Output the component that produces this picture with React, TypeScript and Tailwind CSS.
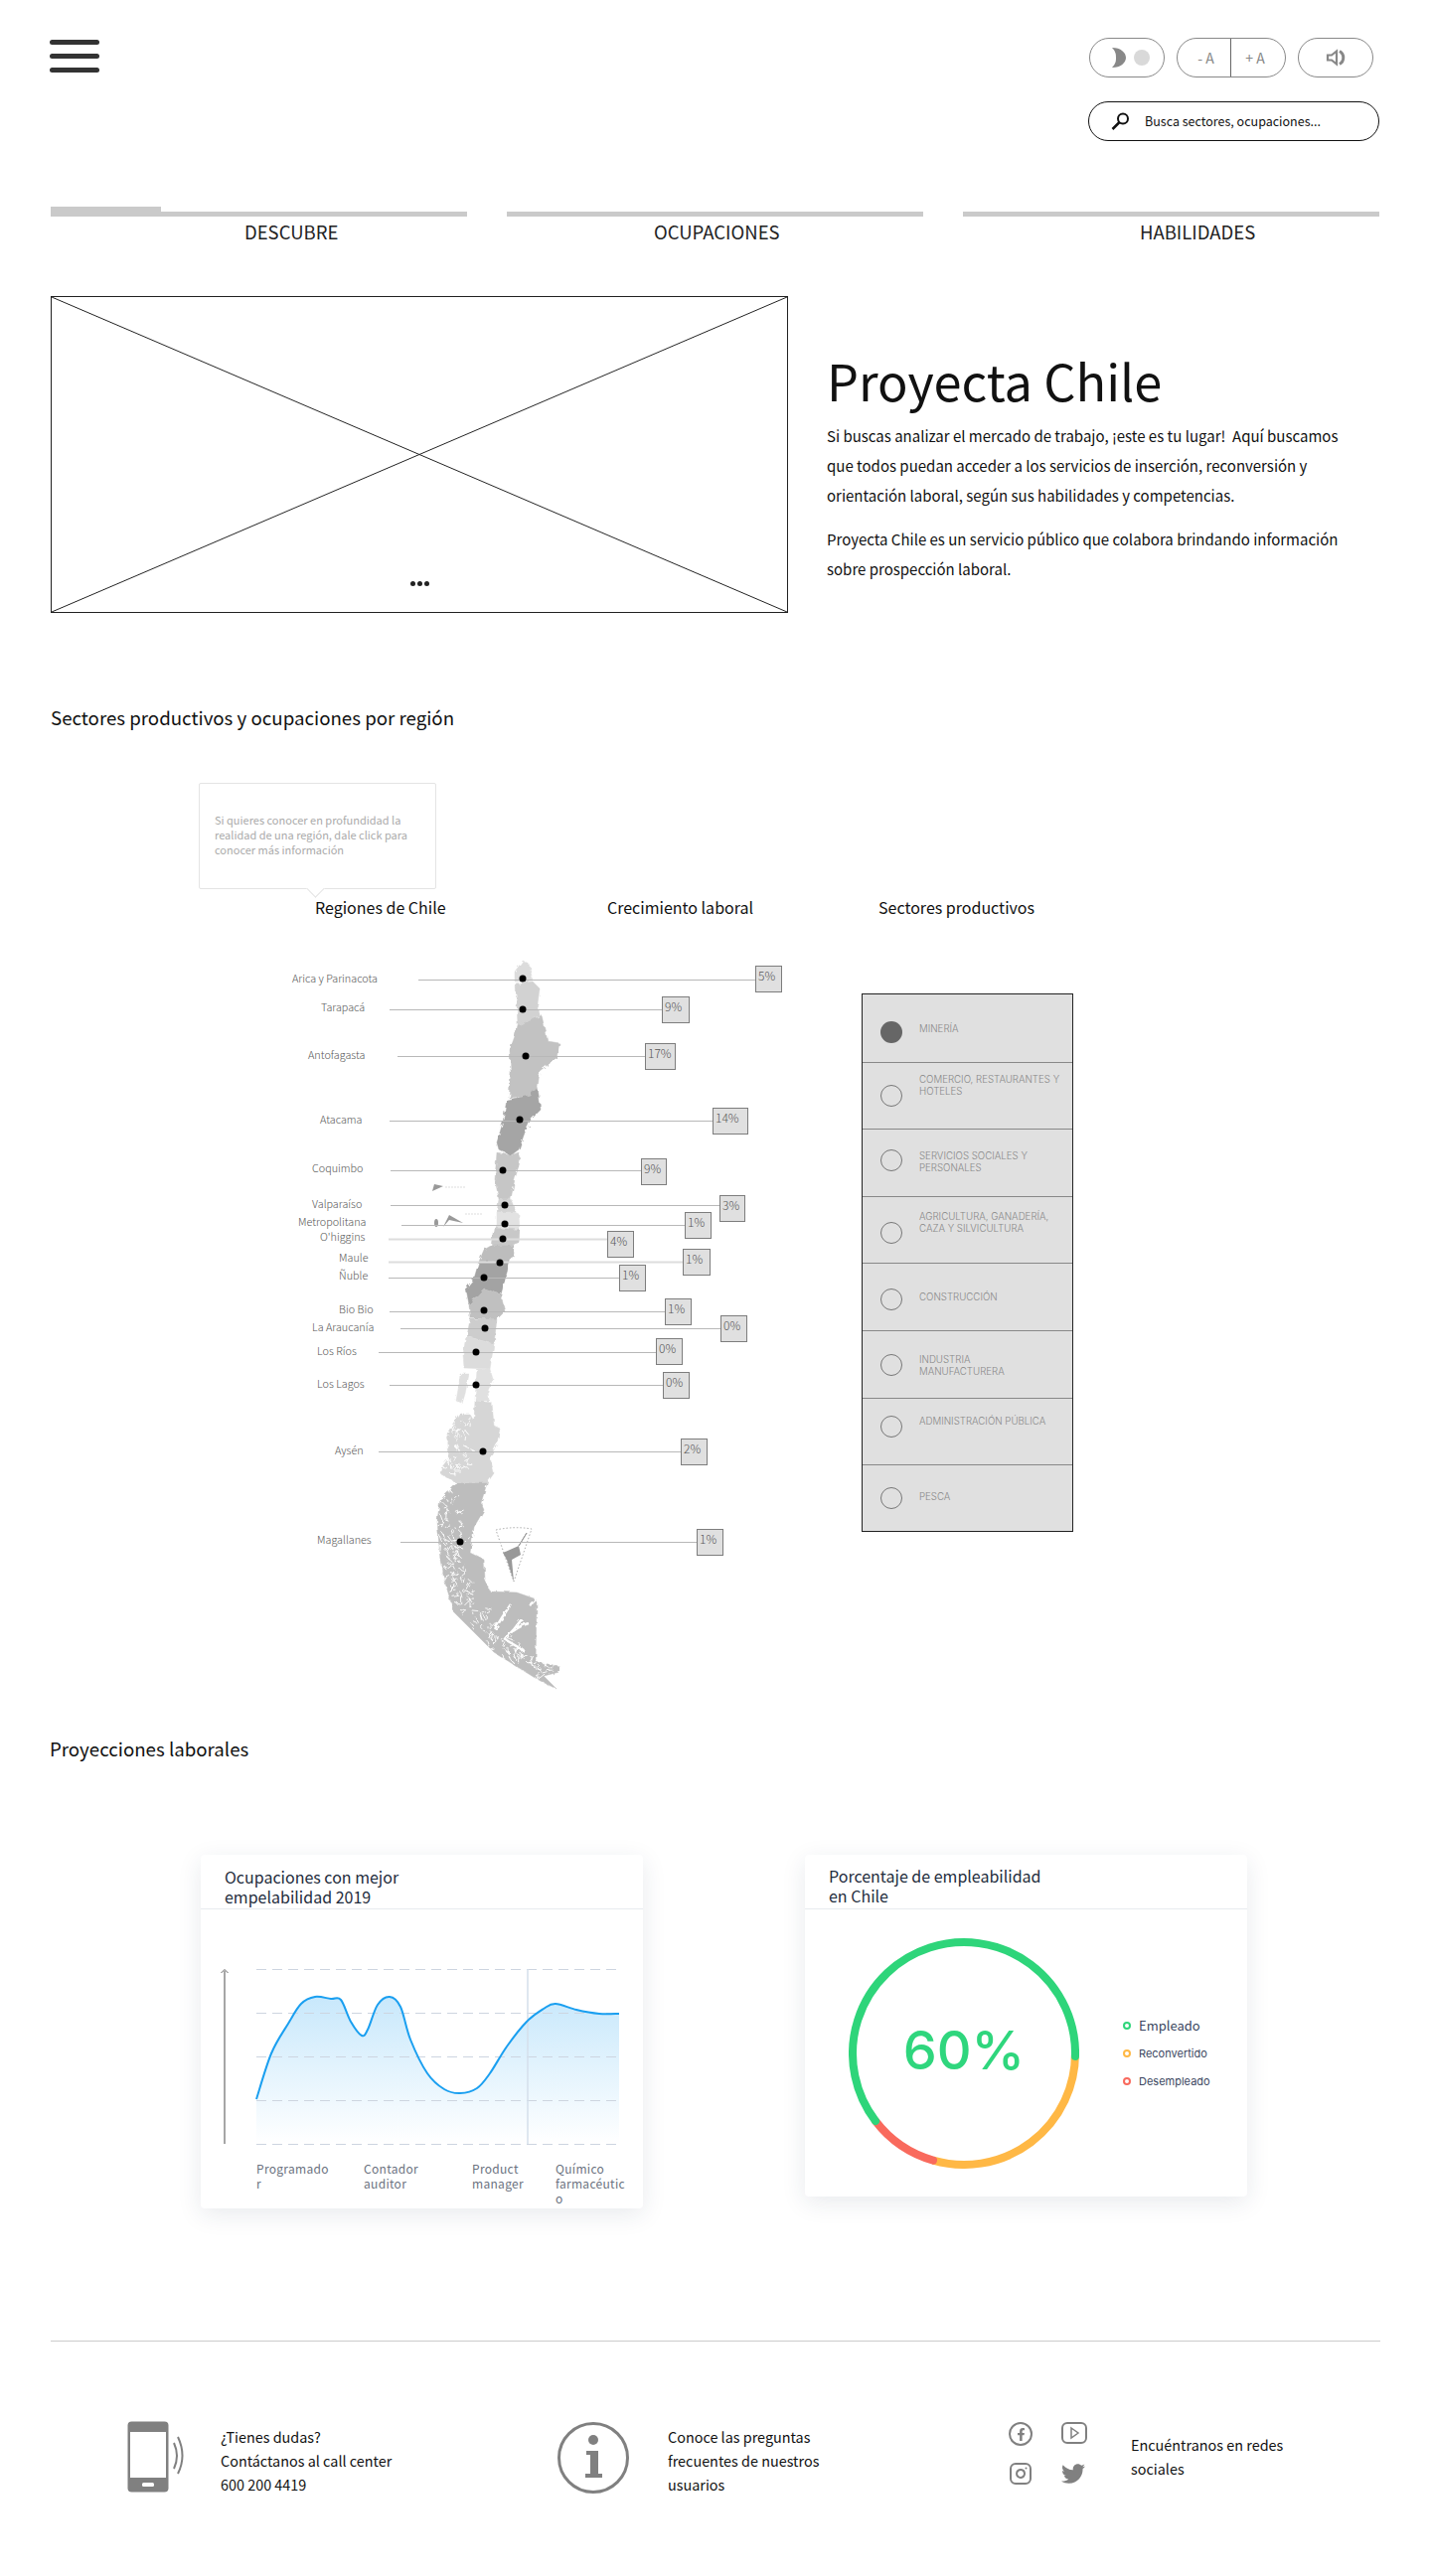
import { Instagram } from "lucide-react";
import { FaFacebookF, FaTwitter } from "react-icons/fa";

// pins on the map, in page coordinates
const regions = [
  { name: "Arica y Parinacota", lx: 294, ly: 984, y: 986, x1: 421, dot: 526, dy: 985, bx: 760, bw: 27, by: 972, pct: "5%" },
  { name: "Tarapacá", lx: 323, ly: 1013, y: 1016, x1: 392, dot: 526, dy: 1016, bx: 666, bw: 28, by: 1003, pct: "9%" },
  { name: "Antofagasta", lx: 310, ly: 1061, y: 1063, x1: 400, dot: 529, dy: 1063, bx: 649, bw: 31, by: 1050, pct: "17%" },
  { name: "Atacama", lx: 322, ly: 1126, y: 1128, x1: 392, dot: 523, dy: 1127, bx: 717, bw: 36, by: 1115, pct: "14%" },
  { name: "Coquimbo", lx: 314, ly: 1175, y: 1178, x1: 393, dot: 506, dy: 1178, bx: 645, bw: 26, by: 1166, pct: "9%" },
  { name: "Valparaíso", lx: 314, ly: 1211, y: 1213, x1: 393, dot: 508, dy: 1213, bx: 724, bw: 26, by: 1203, pct: "3%" },
  { name: "Metropolitana", lx: 300, ly: 1229, y: 1233, x1: 404, dot: 508, dy: 1232, bx: 689, bw: 27, by: 1220, pct: "1%" },
  { name: "O'higgins", lx: 322, ly: 1244, y: 1247, x1: 391, dot: 506, dy: 1247, bx: 611, bw: 27, by: 1239, pct: "4%", soft: true },
  { name: "Maule", lx: 341, ly: 1265, y: 1270, x1: 391, dot: 503, dy: 1271, bx: 687, bw: 28, by: 1257, pct: "1%", soft: true },
  { name: "Ñuble", lx: 341, ly: 1283, y: 1286, x1: 391, dot: 487, dy: 1286, bx: 623, bw: 27, by: 1273, pct: "1%" },
  { name: "Bio Bio", lx: 341, ly: 1317, y: 1320, x1: 392, dot: 487, dy: 1319, bx: 669, bw: 27, by: 1307, pct: "1%" },
  { name: "La Araucanía", lx: 314, ly: 1335, y: 1337, x1: 403, dot: 488, dy: 1337, bx: 725, bw: 27, by: 1324, pct: "0%" },
  { name: "Los Ríos", lx: 319, ly: 1359, y: 1361, x1: 381, dot: 479, dy: 1361, bx: 660, bw: 27, by: 1347, pct: "0%" },
  { name: "Los Lagos", lx: 319, ly: 1392, y: 1394, x1: 392, dot: 479, dy: 1394, bx: 667, bw: 27, by: 1381, pct: "0%" },
  { name: "Aysén", lx: 337, ly: 1459, y: 1461, x1: 381, dot: 486, dy: 1461, bx: 685, bw: 27, by: 1448, pct: "2%" },
  { name: "Magallanes", lx: 319, ly: 1549, y: 1552, x1: 403, dot: 463, dy: 1552, bx: 701, bw: 27, by: 1539, pct: "1%" },
];

const mapShapes = [
  { fill: "#dcdcdc", points: "526,967 532,970 536,987 518,988 518,978 524,970" },
  { fill: "#d2d2d2", points: "519,990 536,988 543,995 541,1010 543,1022 532,1028 521,1032 520,1010" },
  { fill: "#c2c2c2", points: "521,1032 532,1028 545,1022 551,1048 563,1050 560,1065 543,1078 541,1095 532,1103 512,1105 514,1080 513,1057 518,1043" },
  { fill: "#a5a5a5", points: "541,1095 544,1117 534,1127 528,1140 522,1157 514,1163 502,1157 500,1150 506,1130 510,1107 532,1103" },
  { fill: "#c6c6c6", points: "514,1163 522,1160 523,1170 518,1187 514,1207 502,1207 498,1187 500,1160" },
  { fill: "#d4d4d4", points: "502,1207 514,1207 519,1220 500,1220" },
  { fill: "#e2e2e2", points: "500,1220 518,1220 522,1222 523,1238 500,1236" },
  { fill: "#c8c8c8", points: "497,1236 523,1238 522,1252 517,1254 494,1254" },
  { fill: "#bdbdbd", points: "494,1254 517,1254 517,1262 513,1270 482,1270 487,1258" },
  { fill: "#a3a3a3", points: "482,1270 513,1270 504,1303 487,1297 472,1313 469,1297 477,1287" },
  { fill: "#c0c0c0", points: "472,1313 487,1297 504,1303 508,1320 500,1328 473,1327" },
  { fill: "#cdcdcd", points: "473,1328 500,1328 497,1353 470,1345" },
  { fill: "#dcdcdc", points: "469,1345 497,1353 493,1378 467,1377 466,1363" },
  { fill: "#e0e0e0", points: "463,1383 472,1383 468,1403 465,1413 459,1410 462,1393" },
  { fill: "#e0e0e0", points: "480,1378 493,1378 496,1388 491,1400 492,1410 478,1410" },
  { fill: "#d6d6d6", points: "478,1410 495,1412 497,1435 503,1438 500,1453 493,1467 497,1483 490,1493 460,1493 443,1483 444,1478 452,1467 450,1443 462,1423 472,1423 477,1430" },
  { fill: "#bdbdbd", points: "460,1493 490,1493 484,1513 487,1520 477,1537 473,1563 487,1570 488,1590 493,1602 520,1603 540,1610 539,1673 563,1677 563,1683 547,1687 560,1700 540,1690 497,1663 457,1623 447,1590 443,1570 440,1530 443,1510" },
];

// small white inlets along the southern coast
function buildFjords() {
  const coast = [
    [446, 1500],
    [445, 1560],
    [452, 1600],
    [497, 1655],
    [548, 1688],
  ];
  const strokes: string[] = [];
  let seed = 17;
  const next = () => {
    seed = (seed * 137 + 71) % 1009;
    return seed / 1009;
  };
  for (let i = 0; i < 200; i++) {
    const t = (i / 200) * (coast.length - 1);
    const k = Math.floor(t);
    const f = t - k;
    const x = coast[k][0] + (coast[k + 1][0] - coast[k][0]) * f + next() * 26 - 4;
    const y = coast[k][1] + (coast[k + 1][1] - coast[k][1]) * f - next() * 16 + 8;
    const a = next() * 6.28;
    const len = 2 + next() * 7;
    strokes.push(`M${x.toFixed(1)} ${y.toFixed(1)} l${(Math.cos(a) * len).toFixed(1)} ${(Math.sin(a) * len).toFixed(1)}`);
  }
  for (let i = 0; i < 60; i++) {
    const x = 450 + next() * 24;
    const y = 1424 + next() * 64;
    const a = next() * 6.28;
    const len = 2 + next() * 5;
    strokes.push(`M${x.toFixed(1)} ${y.toFixed(1)} l${(Math.cos(a) * len).toFixed(1)} ${(Math.sin(a) * len).toFixed(1)}`);
  }
  return strokes.join(" ");
}
const fjords = buildFjords();

const sectors = [
  { label: ["MINERÍA"], radio: "mt-[27px]", text: "mt-[29px]", active: true },
  { label: ["COMERCIO, RESTAURANTES Y", "HOTELES"], radio: "mt-[22px]", text: "mt-[11px]" },
  { label: ["SERVICIOS SOCIALES Y", "PERSONALES"], radio: "mt-[20px]", text: "mt-[21px]" },
  { label: ["AGRICULTURA, GANADERÍA,", "CAZA Y SILVICULTURA"], radio: "mt-[25px]", text: "mt-[14px]" },
  { label: ["CONSTRUCCIÓN"], radio: "mt-[25px]", text: "mt-[28px]" },
  { label: ["INDUSTRIA", "MANUFACTURERA"], radio: "mt-[23px]", text: "mt-[23px]" },
  { label: ["ADMINISTRACIÓN PÚBLICA"], radio: "mt-[17px]", text: "mt-[17px]" },
  { label: ["PESCA"], radio: "mt-[22px]", text: "mt-[26px]" },
];

const chartPoints = [
  [258, 2113], [273, 2067], [290, 2037], [303, 2017], [317, 2010], [333, 2012], [343, 2013], [353, 2035],
  [364, 2049], [370, 2043], [380, 2018], [392, 2010], [403, 2020], [413, 2053], [430, 2087], [447, 2103],
  [463, 2107], [480, 2102], [493, 2087], [510, 2060], [530, 2035], [547, 2022], [559, 2017], [580, 2023],
  [603, 2027], [623, 2027],
];

function smoothLine(pts: number[][]) {
  let d = `M${pts[0][0]} ${pts[0][1]}`;
  for (let i = 0; i < pts.length - 1; i++) {
    const p0 = pts[Math.max(i - 1, 0)];
    const p1 = pts[i];
    const p2 = pts[i + 1];
    const p3 = pts[Math.min(i + 2, pts.length - 1)];
    const c1x = p1[0] + (p2[0] - p0[0]) / 6;
    const c1y = p1[1] + (p2[1] - p0[1]) / 6;
    const c2x = p2[0] - (p3[0] - p1[0]) / 6;
    const c2y = p2[1] - (p3[1] - p1[1]) / 6;
    d += ` C${c1x.toFixed(1)} ${c1y.toFixed(1)} ${c2x.toFixed(1)} ${c2y.toFixed(1)} ${p2[0]} ${p2[1]}`;
  }
  return d;
}
const chartLine = smoothLine(chartPoints);

function Tab({ label, className, progress }: { label: string; className: string; progress?: boolean }) {
  return (
    <div>
      <div className="flex h-[10px] items-end">
        <div className="relative h-[5px] w-full bg-[#cacaca]">
          {progress && <div className="absolute bottom-0 left-0 h-[10px] w-[111px] bg-[#cacaca]" />}
        </div>
      </div>
      <div className={`pt-[1px] text-[18.5px] leading-[28px] text-[#222] ${className}`}>{label}</div>
    </div>
  );
}

export default function App() {
  return (
    <div className="relative h-[2593px] w-[1440px] overflow-hidden bg-white font-['Noto_Sans_CJK_SC',sans-serif] text-[#111]">
      {/* Header */}
      <header className="flex justify-between pl-[50px] pr-[52px] pt-[38px]">
        <div className="flex w-[50px] flex-col gap-[9px] pt-[2px]">
          <span className="h-[5px] rounded-full bg-[#333]" />
          <span className="h-[5px] rounded-full bg-[#333]" />
          <span className="h-[5px] rounded-full bg-[#333]" />
        </div>
        <div className="flex flex-col items-end">
          <div className="mr-[6px] flex gap-[12px]">
            <button className="flex h-[40px] w-[76px] items-center rounded-full border border-[#888] pl-[21px]">
              <svg width="40" height="22" viewBox="0 0 40 22">
                <path d="M1 1 C10 1 15 6 15 11 C15 16 10 21 1 21 C5 17 5 14 5 11 C5 8 5 5 1 1 Z" fill="#888" />
                <circle cx="31" cy="11" r="8" fill="#d9d9d9" />
              </svg>
            </button>
            <div className="flex h-[40px] w-[110px] rounded-full border border-[#888] text-[14px] text-[#888]">
              <button className="w-[54px] border-r border-[#666] pl-[4px]">- A</button>
              <button className="flex-1 pr-[6px]">+ A</button>
            </div>
            <button className="flex h-[40px] w-[76px] items-center justify-center rounded-full border border-[#888]">
              <svg width="20" height="20" viewBox="0 0 20 20" fill="none" stroke="#888" strokeWidth="2.2">
                <path d="M2 7.5h4l5-4v13l-5-4H2z" />
                <path d="M14 3.5a7.5 7.5 0 0 1 0 13" strokeWidth="3" />
              </svg>
            </button>
          </div>
          <div className="mt-[24px] flex h-[40px] w-[293px] items-center rounded-full border border-[#111] pl-[22px]">
            <svg width="19" height="18" viewBox="0 0 19 18" fill="none" stroke="#111" strokeWidth="2">
              <circle cx="12" cy="6.5" r="5" />
              <path d="M8.5 10 L1.5 17" strokeWidth="2.5" />
            </svg>
            <span className="ml-[15px] text-[12.5px] leading-[20px]">Busca sectores, ocupaciones...</span>
          </div>
        </div>
      </header>

      {/* Tabs */}
      <nav className="ml-[51px] mt-[66px] grid w-[1337px] grid-cols-[419px_419px_419px] gap-x-[40px]">
        <Tab label="DESCUBRE" className="pl-[195px]" progress />
        <Tab label="OCUPACIONES" className="pl-[148px]" />
        <Tab label="HABILIDADES" className="pl-[178px]" />
      </nav>

      {/* Hero */}
      <section className="ml-[51px] mt-[51px] flex">
        <div className="relative h-[319px] w-[742px] border border-[#222]">
          <svg className="absolute inset-0 h-full w-full" viewBox="0 0 742 319" preserveAspectRatio="none">
            <path d="M0 0 L742 319 M742 0 L0 319" stroke="#222" strokeWidth="1" />
          </svg>
          <div className="absolute bottom-[26px] left-[361px] flex gap-[2px]">
            <span className="h-[5px] w-[5px] rounded-full bg-[#222]" />
            <span className="h-[5px] w-[5px] rounded-full bg-[#222]" />
            <span className="h-[5px] w-[5px] rounded-full bg-[#222]" />
          </div>
        </div>
        <div className="ml-[39px] w-[560px] pt-[52px]">
          <h1 className="text-[50.5px] font-normal leading-[64px]">Proyecta Chile</h1>
          <p className="mt-[10px] text-[15px] leading-[30px]">
            Si buscas analizar el mercado de trabajo, ¡este es tu lugar!&nbsp; Aquí buscamos
            <br />
            que todos puedan acceder a los servicios de inserción, reconversión y
            <br />
            orientación laboral, según sus habilidades y competencias.
          </p>
          <p className="mt-[14px] text-[15px] leading-[30px]">
            Proyecta Chile es un servicio público que colabora brindando información
            <br />
            sobre prospección laboral.
          </p>
        </div>
      </section>

      {/* Regiones */}
      <section className="relative mt-[91px]">
        <h2 className="pl-[51px] text-[18.7px] font-normal leading-[28px]">Sectores productivos y ocupaciones por región</h2>

        <div className="absolute left-[200px] top-[80px] h-[107px] w-[239px] rounded-[2px] border border-[#e4e4e4] bg-white px-[15px] pt-[29px] text-[11px] leading-[15px] text-[#aaa]">
          Si quieres conocer en profundidad la
          <br />
          realidad de una región, dale click para
          <br />
          conocer más información
          <span className="absolute bottom-[-7px] left-[110px] h-[13px] w-[13px] rotate-45 border-b border-r border-[#e4e4e4] bg-white" />
        </div>

        <div className="mt-[164px] flex text-[16px] leading-[26px]">
          <div className="ml-[317px] w-[294px]">Regiones de Chile</div>
          <div className="w-[273px]">Crecimiento laboral</div>
          <div>Sectores productivos</div>
        </div>

        <div className="mt-[34px] flex">
          {/* Map canvas */}
          <div className="relative h-[750px] w-[867px] shrink-0">
            <svg className="absolute inset-0" width="867" height="750" viewBox="0 960 867 750">
              <defs>
                <filter id="rough" x="-5%" y="-5%" width="110%" height="110%">
                  <feTurbulence type="fractalNoise" baseFrequency="0.18" numOctaves="2" seed="4" result="noise" />
                  <feDisplacementMap in="SourceGraphic" in2="noise" scale="5" />
                </filter>
              </defs>
              <g filter="url(#rough)">
                {mapShapes.map((s) => (
                  <polygon key={s.points} points={s.points} fill={s.fill} stroke={s.fill} strokeWidth="0.5" />
                ))}
                <path d={fjords} fill="none" stroke="#fff" strokeWidth="0.9" />
                <path
                  d="M514 1615 Q505 1628 498 1640 M525 1630 Q518 1640 508 1650 L528 1662 M516 1642 Q524 1636 532 1634 M541 1608 L533 1616"
                  fill="none"
                  stroke="#fff"
                  strokeWidth="2.5"
                />
              </g>
              {/* Antarctic wedge and islands */}
              <path d="M499 1540 Q517 1536 535 1539 L517 1592 Z" fill="none" stroke="#aaa" strokeWidth="1" strokeDasharray="1.5 2" />
              <path d="M506 1563 L522 1556 L524 1565 L515 1570 L517 1592 L510 1570 Z" fill="#999" />
              <path d="M522 1556 L530 1543 L524 1553 Z" fill="#999" stroke="#999" />
              <path d="M435 1199 L437 1192 L446 1194 Z M437 1231 a2 4 0 1 0 4 0 a2 4 0 1 0 -4 0 Z M446 1235 L452 1223 L466 1231 L452 1228 Z" fill="#999" />
              <path d="M448 1195 H468 M468 1222 H486" stroke="#ddd" strokeDasharray="2 1" />
              {regions.map((r) => (
                <line
                  key={r.name}
                  x1={r.x1}
                  x2={r.bx}
                  y1={r.y + 0.5}
                  y2={r.y + 0.5}
                  stroke={r.soft ? "#ddd" : "#b8b8b8"}
                  strokeWidth={r.soft ? 2 : 1}
                />
              ))}
              {regions.map((r) => (
                <circle key={r.name} cx={r.dot} cy={r.dy} r="3.5" fill="#000" />
              ))}
            </svg>
            {regions.map((r) => (
              <span
                key={r.name}
                className="absolute whitespace-nowrap text-[10.8px] font-light leading-[16px] text-[#555]"
                style={{ left: r.lx, top: r.ly - 968 }}
              >
                {r.name}
              </span>
            ))}
            {regions.map((r) => (
              <span
                key={r.name}
                className="absolute h-[27px] border border-[#7d7d7d] bg-[#e0e0e0] pl-[2px] pt-[1px] text-[12px] font-light leading-[16px] text-[#555]"
                style={{ left: r.bx, top: r.by - 960, width: r.bw }}
              >
                {r.pct}
              </span>
            ))}
          </div>

          {/* Sector list */}
          <div className="mt-[40px] h-[542px] w-[213px] border border-[#222] bg-[#e0e0e0]">
            {sectors.map((s, i) => (
              <div key={s.label[0]} className={`flex h-[67.6px] ${i > 0 ? "border-t border-[#888]" : ""}`}>
                <span
                  className={`ml-[18px] h-[22px] w-[22px] shrink-0 rounded-full ${s.radio} ${
                    s.active ? "bg-[#666]" : "border border-[#777]"
                  }`}
                />
                <div className={`ml-[17px] whitespace-nowrap font-['Inter',sans-serif] text-[9.7px] font-light leading-[12px] text-[#888] ${s.text}`}>
                  {s.label.map((l) => (
                    <div key={l}>{l}</div>
                  ))}
                </div>
              </div>
            ))}
          </div>
        </div>
      </section>

      {/* Proyecciones */}
      <h2 className="mt-[36px] pl-[50px] text-[18.7px] font-normal leading-[28px]">Proyecciones laborales</h2>

      <section className="ml-[202px] mt-[93px] flex items-start gap-[163px]">
        <div className="h-[356px] w-[445px] rounded-[4px] bg-white shadow-[0_6px_24px_rgba(30,50,80,0.1)]">
          <div className="h-[55px] border-b border-[#e8ebef] pl-[24px] pt-[12px] text-[16px] leading-[20px] text-[#1f2d3d]">
            Ocupaciones con mejor
            <br />
            empelabilidad 2019
          </div>
          <svg className="block" width="445" height="243" viewBox="202 1922 445 243">
            <defs>
              <linearGradient id="areaFill" x1="0" y1="0" x2="0" y2="1">
                <stop offset="0" stopColor="#1a9ff0" stopOpacity="0.24" />
                <stop offset="1" stopColor="#1a9ff0" stopOpacity="0" />
              </linearGradient>
            </defs>
            <path d={`${chartLine} V2158 H258 Z`} fill="url(#areaFill)" />
            <path
              d="M258 1982.5 H623 M258 2026.5 H623 M258 2070.5 H623 M258 2114.5 H623 M258 2158.5 H623"
              stroke="#cdd5e0"
              strokeDasharray="10 6"
            />
            <path d="M531 1982 V2158" stroke="#d5dfeb" strokeWidth="1.5" />
            <path d={chartLine} fill="none" stroke="#1a9ff0" strokeWidth="2" />
            <path d="M226 2158 V1984" stroke="#888" strokeWidth="1.5" />
            <path d="M222.5 1986 L226 1982.5 L229.5 1986" fill="none" stroke="#666" />
          </svg>
          <div className="mt-[10px] flex pl-[56px] text-[12px] leading-[15px] tracking-[0.3px] text-[#6b7280]">
            <div className="w-[108px]">
              Programado
              <br />r
            </div>
            <div className="w-[109px]">
              Contador
              <br />
              auditor
            </div>
            <div className="w-[84px]">
              Product
              <br />
              manager
            </div>
            <div>
              Químico
              <br />
              farmacéutic
              <br />o
            </div>
          </div>
        </div>

        <div className="h-[344px] w-[445px] rounded-[4px] bg-white shadow-[0_6px_24px_rgba(30,50,80,0.1)]">
          <div className="h-[55px] border-b border-[#e8ebef] pl-[24px] pt-[11px] text-[16px] leading-[20px] text-[#1f2d3d]">
            Porcentaje de empleabilidad
            <br />
            en Chile
          </div>
          <div className="ml-[44px] mt-[29px] flex items-center">
            <div className="relative h-[232px] w-[232px]">
              <svg width="232" height="232" viewBox="-116 -116 232 232" fill="none" strokeWidth="8">
                <path d="M112 0 A112 112 0 0 1 -31 107.6" stroke="#ffb845" />
                <path d="M-31 107.6 A112 112 0 0 1 -89 68" stroke="#f96a5d" strokeLinecap="round" />
                <path d="M-89 68 A112 112 0 1 1 112 3" stroke="#2ed57a" strokeLinecap="round" />
              </svg>
              <div className="absolute inset-0 flex items-center justify-center pb-[6px] font-['Inter',sans-serif] text-[54px] font-medium leading-none text-[#2fd67d]">
                60%
              </div>
            </div>
            <div className="ml-[44px] flex flex-col text-[13px] text-[#3a4660]">
              <div className="flex h-[28px] items-center gap-[8px]">
                <span className="h-[8px] w-[8px] rounded-full border-2 border-[#2ed57a]" />
                Empleado
              </div>
              <div className="flex h-[28px] items-center gap-[8px] font-['Inter',sans-serif] text-[11px]">
                <span className="h-[8px] w-[8px] rounded-full border-2 border-[#ffb845]" />
                Reconvertido
              </div>
              <div className="flex h-[28px] items-center gap-[8px] font-['Inter',sans-serif] text-[11px]">
                <span className="h-[8px] w-[8px] rounded-full border-2 border-[#f96a5d]" />
                Desempleado
              </div>
            </div>
          </div>
        </div>
      </section>

      {/* Footer */}
      <footer className="absolute left-0 top-[2356px] w-full">
        <div className="ml-[51px] h-px w-[1338px] bg-[#ccc]" />
        <div className="ml-[128px] mt-[80px] flex text-[14.4px] leading-[24px]">
          <div className="flex w-[433px]">
            <svg width="64" height="72" viewBox="0 0 64 72" fill="none">
              <rect x="0.5" y="0.5" width="41" height="71" rx="4" fill="#808080" />
              <rect x="3" y="11" width="36" height="46" fill="#fff" />
              <rect x="15" y="62" width="12" height="4" rx="1.5" fill="#fff" />
              <path d="M47 22 Q53 35 47 48" stroke="#808080" strokeWidth="2" />
              <path d="M51 16 Q60 35 51 53" stroke="#808080" strokeWidth="2" />
            </svg>
            <p className="ml-[30px] pt-[4px]">
              ¿Tienes dudas?
              <br />
              Contáctanos al call center
              <br />
              600 200 4419
            </p>
          </div>
          <div className="flex w-[454px]">
            <svg width="72" height="74" viewBox="0 0 72 74" fill="none">
              <circle cx="36" cy="37" r="34.5" stroke="#808080" strokeWidth="3" />
              <circle cx="36" cy="19" r="5" fill="#808080" />
              <path d="M29 30 H41 V53 H45 V57 H28 V53 H33 V34 H29 Z" fill="#808080" />
            </svg>
            <p className="ml-[39px] pt-[4px]">
              Conoce las preguntas
              <br />
              frecuentes de nuestros
              <br />
              usuarios
            </p>
          </div>
          <div className="flex">
            <div className="grid h-[64px] w-[80px] grid-cols-[53px_27px] gap-y-[16px] pt-[1px] text-[#808080]">
              <span className="flex h-[24px] w-[24px] items-center justify-center rounded-full border-2 border-[#808080]">
                <FaFacebookF size={13} />
              </span>
              <svg width="26" height="22" viewBox="0 0 26 22" fill="none" stroke="#808080" strokeWidth="2">
                <rect x="1" y="1" width="24" height="20" rx="5" />
                <path d="M10 6 L17 11 L10 16 Z" strokeWidth="1.5" />
              </svg>
              <Instagram size={24} strokeWidth={2} />
              <FaTwitter size={24} />
            </div>
            <p className="ml-[43px] pt-[12px]">
              Encuéntranos en redes
              <br />
              sociales
            </p>
          </div>
        </div>
      </footer>
    </div>
  );
}
